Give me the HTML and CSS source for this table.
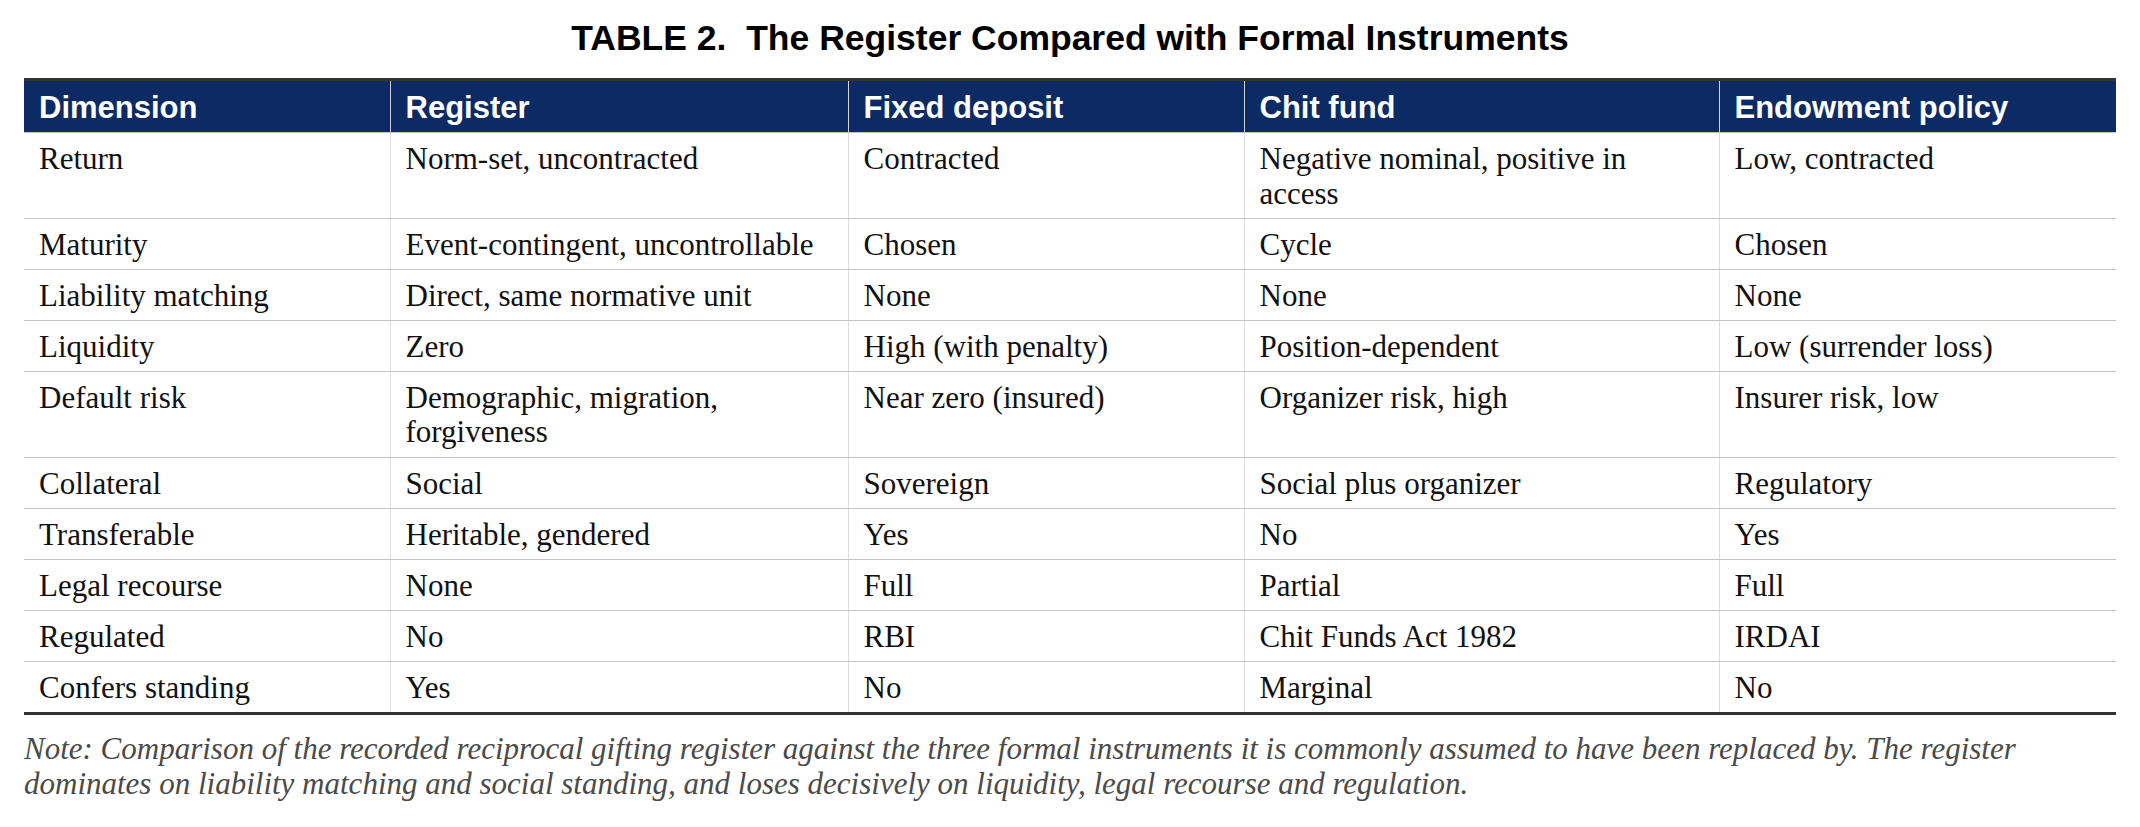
FILE: index.html
```html
<!DOCTYPE html>
<html lang="en">
<head>
<meta charset="utf-8">
<title>Table 2</title>
<link rel="stylesheet" href="styles.css">
</head>
<body>
<div class="page">
  <h1 class="title">TABLE 2.&nbsp; The Register Compared with Formal Instruments</h1>
  <table class="cmp">
    <colgroup>
      <col class="c1"><col class="c2"><col class="c3"><col class="c4"><col class="c5">
    </colgroup>
    <thead>
      <tr><th>Dimension</th><th>Register</th><th>Fixed deposit</th><th>Chit fund</th><th>Endowment policy</th></tr>
    </thead>
    <tbody>
      <tr><td>Return</td><td>Norm-set, uncontracted</td><td>Contracted</td><td>Negative nominal, positive in access</td><td>Low, contracted</td></tr>
      <tr><td>Maturity</td><td>Event-contingent, uncontrollable</td><td>Chosen</td><td>Cycle</td><td>Chosen</td></tr>
      <tr><td>Liability matching</td><td>Direct, same normative unit</td><td>None</td><td>None</td><td>None</td></tr>
      <tr><td>Liquidity</td><td>Zero</td><td>High (with penalty)</td><td>Position-dependent</td><td>Low (surrender loss)</td></tr>
      <tr><td>Default risk</td><td>Demographic, migration, forgiveness</td><td>Near zero (insured)</td><td>Organizer risk, high</td><td>Insurer risk, low</td></tr>
      <tr><td>Collateral</td><td>Social</td><td>Sovereign</td><td>Social plus organizer</td><td>Regulatory</td></tr>
      <tr><td>Transferable</td><td>Heritable, gendered</td><td>Yes</td><td>No</td><td>Yes</td></tr>
      <tr><td>Legal recourse</td><td>None</td><td>Full</td><td>Partial</td><td>Full</td></tr>
      <tr><td>Regulated</td><td>No</td><td>RBI</td><td>Chit Funds Act 1982</td><td>IRDAI</td></tr>
      <tr><td>Confers standing</td><td>Yes</td><td>No</td><td>Marginal</td><td>No</td></tr>
    </tbody>
  </table>
  <p class="note">Note: Comparison of the recorded reciprocal gifting register against the three formal instruments it is commonly assumed to have been replaced by. The register dominates on liability matching and social standing, and loses decisively on liquidity, legal recourse and regulation.</p>
</div>
</body>
</html>
```
FILE: styles.css
```css
html, body {
  margin: 0;
  padding: 0;
  background: #ffffff;
}

.page {
  padding: 18px 24px 0 24px;
  font-family: "Liberation Serif", "Times New Roman", serif;
  font-size: 31px;
  color: #111111;
}

.title {
  margin: 0 0 20px 0;
  font-family: "Liberation Sans", Arial, sans-serif;
  font-size: 35.5px;
  font-weight: bold;
  line-height: 40px;
  text-align: center;
  color: #000000;
}

.cmp {
  width: 2092px;
  border-collapse: collapse;
  table-layout: fixed;
  border-top: 3px solid #333333;
  border-bottom: 3px solid #333333;
}

.c1 { width: 366px; }
.c2 { width: 458px; }
.c3 { width: 396px; }
.c4 { width: 475px; }
.c5 { width: 397px; }

.cmp th {
  background: #0c2a63;
  color: #ffffff;
  font-family: "Liberation Sans", Arial, sans-serif;
  font-size: 31px;
  font-weight: bold;
  text-align: left;
  line-height: 34.33px;
  padding: 10px 15px 7px 15px;
  border-bottom: 1px solid #c4c4c4;
  border-left: 1px solid #d4d4d4;
  vertical-align: top;
}

.cmp td {
  text-align: left;
  vertical-align: top;
  line-height: 34.33px;
  padding: 9px 15px 6.8px 15px;
  border-bottom: 1px solid #c4c4c4;
  border-left: 1px solid #dddddd;
}

.cmp th:first-child,
.cmp td:first-child {
  border-left: none;
}

.cmp tbody tr:last-child td {
  border-bottom: 3px solid #333333;
}

.note {
  margin: 16px 0 0 0;
  font-style: italic;
  font-size: 31px;
  line-height: 35px;
  color: #4a4a4a;
}
```
